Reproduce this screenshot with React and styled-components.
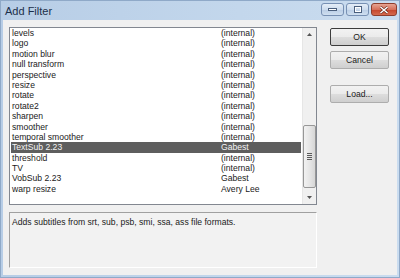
import React from "react";
import styled, { createGlobalStyle } from "styled-components";

const GlobalStyle = createGlobalStyle`
  html, body {
    margin: 0;
    padding: 0;
    background: #f0f0f0;
  }
  body {
    font-family: "Liberation Sans", Arial, sans-serif;
  }
`;

const filters = [
  ["levels", "(internal)"],
  ["logo", "(internal)"],
  ["motion blur", "(internal)"],
  ["null transform", "(internal)"],
  ["perspective", "(internal)"],
  ["resize", "(internal)"],
  ["rotate", "(internal)"],
  ["rotate2", "(internal)"],
  ["sharpen", "(internal)"],
  ["smoother", "(internal)"],
  ["temporal smoother", "(internal)"],
  ["TextSub 2.23", "Gabest"],
  ["threshold", "(internal)"],
  ["TV", "(internal)"],
  ["VobSub 2.23", "Gabest"],
  ["warp resize", "Avery Lee"],
];

const Window = styled.div`
  width: 400px;
  height: 278px;
  display: flex;
  flex-direction: column;
  background: linear-gradient(90deg, #b7cde6 0%, #c3d7ec 60%, #cadcef 100%);
  box-sizing: border-box;
  border: 1px solid #8fa9c8;
`;

const TitleBar = styled.div`
  height: 19px;
  display: flex;
  align-items: center;
  justify-content: space-between;
  padding: 0 2px 0 4px;
`;

const Title = styled.span`
  font-family: "Liberation Sans", Arial, sans-serif;
  font-size: 11px;
  color: #1c2f4a;
`;

const Caption = styled.div`
  display: flex;
  gap: 2px;
  align-self: flex-start;
  margin-top: 2px;
`;

const CapButton = styled.div`
  width: ${(p) => (p.close ? "26px" : "23px")};
  height: 13px;
  box-sizing: border-box;
  border: 1px solid ${(p) => (p.close ? "#8e3d2c" : "#7790b3")};
  border-radius: 3px;
  background: ${(p) =>
    p.close
      ? "linear-gradient(180deg, #e6a493 0%, #d6705a 50%, #c5452b 52%, #d56a4e 100%)"
      : "linear-gradient(180deg, #e4edf7 0%, #cddcee 50%, #b9cde5 52%, #cfdff0 100%)"};
  display: flex;
  align-items: center;
  justify-content: center;
`;

const Client = styled.div`
  flex: 1;
  margin: 0 2px 2px;
  background: #f0f0f0;
  display: grid;
  grid-template-columns: 308px 59px;
  column-gap: 13px;
  padding: 7px 6px 7px 6px;
`;

const LeftCol = styled.div`
  display: flex;
  flex-direction: column;
  gap: 7px;
`;

const ListBox = styled.div`
  height: 178px;
  box-sizing: border-box;
  border: 1px solid #828790;
  background: #fff;
  display: flex;
`;

const Rows = styled.div`
  flex: 1;
  padding: 0 1px;
`;

const Row = styled.div`
  height: 10.4px;
  line-height: 10.4px;
  display: grid;
  grid-template-columns: 209px 1fr;
  font-size: 8.6px;
  padding-left: 1px;
  white-space: nowrap;
  color: ${(p) => (p.selected ? "#f4f4f4" : "#1a1a1a")};
  background: ${(p) => (p.selected ? "#5e5e5e" : "transparent")};
`;

const ScrollBar = styled.div`
  width: 13px;
  background: #f0f0f0;
  border-left: 1px solid #e6e6e6;
  display: flex;
  flex-direction: column;
`;

const Arrow = styled.div`
  height: 13px;
  display: flex;
  align-items: center;
  justify-content: center;
`;

const Track = styled.div`
  flex: 1;
  display: flex;
  flex-direction: column;
  padding-top: 84px;
  padding-bottom: 2px;
`;

const Thumb = styled.div`
  height: 63px;
  box-sizing: border-box;
  border: 1px solid #979797;
  border-radius: 2px;
  background: linear-gradient(90deg, #f2f2f2 0%, #e6e6e6 50%, #d6d6d6 100%);
  display: flex;
  flex-direction: column;
  align-items: center;
  justify-content: center;
  gap: 1px;
`;

const Grip = styled.div`
  width: 5px;
  height: 1px;
  background: #5a5a5a;
`;

const Description = styled.div`
  flex: 1;
  box-sizing: border-box;
  border: 1px solid;
  border-color: #a0a0a0 #ffffff #ffffff #a0a0a0;
  background: #f2f2f2;
  font-size: 8.6px;
  color: #1a1a1a;
  padding: 4px 2px;
`;

const RightCol = styled.div`
  display: flex;
  flex-direction: column;
  padding-top: 1px;
`;

const Button = styled.div`
  height: 18px;
  box-sizing: border-box;
  border: 1px solid ${(p) => (p.primary ? "#3c3c3c" : "#adadad")};
  border-radius: 2px;
  background: linear-gradient(180deg, #f2f2f2 0%, #ebebeb 50%, #dddddd 52%, #cfcfcf 100%);
  font-size: 8.6px;
  color: #1a1a1a;
  display: flex;
  align-items: center;
  justify-content: center;
  margin-top: ${(p) => p.gap || 0}px;
`;

const App = () => (
  <>
    <GlobalStyle />
    <Window>
      <TitleBar>
        <Title>Add Filter</Title>
        <Caption>
          <CapButton>
            <svg width="9" height="3" viewBox="0 0 9 3">
              <rect x="0.5" y="0.5" width="8" height="2" fill="#fff" stroke="#4a5f7d" strokeWidth="1" />
            </svg>
          </CapButton>
          <CapButton>
            <svg width="8" height="7" viewBox="0 0 8 7">
              <rect x="0.5" y="0.5" width="7" height="6" fill="none" stroke="#4a5f7d" strokeWidth="1" />
              <rect x="1.5" y="1.5" width="5" height="4" fill="none" stroke="#fff" strokeWidth="1" />
            </svg>
          </CapButton>
          <CapButton close>
            <svg width="10" height="8" viewBox="0 0 10 8">
              <path d="M1.5 1 L8.5 7 M8.5 1 L1.5 7" stroke="#5a1e12" strokeWidth="2.6" />
              <path d="M1.5 1 L8.5 7 M8.5 1 L1.5 7" stroke="#fff" strokeWidth="1.6" />
            </svg>
          </CapButton>
        </Caption>
      </TitleBar>
      <Client>
        <LeftCol>
          <ListBox>
            <Rows>
              {filters.map(([name, author]) => (
                <Row key={name} selected={name === "TextSub 2.23"}>
                  <span>{name}</span>
                  <span>{author}</span>
                </Row>
              ))}
            </Rows>
            <ScrollBar>
              <Arrow>
                <svg width="5" height="3" viewBox="0 0 5 3">
                  <path d="M0 3 L2.5 0 L5 3 Z" fill="#555" />
                </svg>
              </Arrow>
              <Track>
                <Thumb>
                  <Grip />
                  <Grip />
                  <Grip />
                  <Grip />
                </Thumb>
              </Track>
              <Arrow>
                <svg width="5" height="3" viewBox="0 0 5 3">
                  <path d="M0 0 L5 0 L2.5 3 Z" fill="#555" />
                </svg>
              </Arrow>
            </ScrollBar>
          </ListBox>
          <Description>
            Adds subtitles from srt, sub, psb, smi, ssa, ass file formats.
          </Description>
        </LeftCol>
        <RightCol>
          <Button primary>OK</Button>
          <Button gap={5}>Cancel</Button>
          <Button gap={16}>Load...</Button>
        </RightCol>
      </Client>
    </Window>
  </>
);

export default App;
